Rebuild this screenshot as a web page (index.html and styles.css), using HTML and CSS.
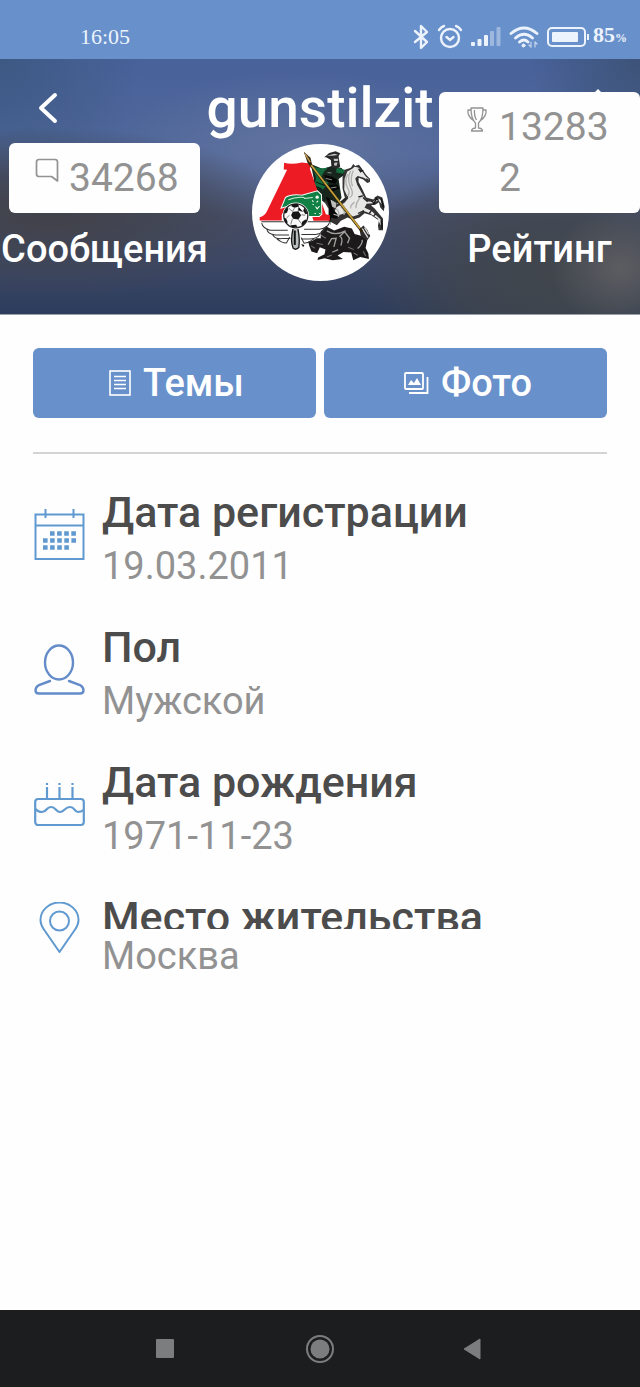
FILE: index.html
```html
<!DOCTYPE html>
<html lang="ru">
<head>
<meta charset="utf-8">
<meta name="viewport" content="width=device-width, initial-scale=1">
<title>gunstilzit</title>
<link rel="stylesheet" href="styles.css">
</head>
<body>
<div class="statusbar">
  <span class="clock">16:05</span>
  <div class="status-icons">
    <svg width="16" height="26" viewBox="0 0 16 26" fill="none" stroke="currentColor" stroke-width="2.4" stroke-linejoin="round" stroke-linecap="round"><path d="M2 7l12 11-6 6V2l6 6L2 18"/></svg>
    <svg width="26" height="26" viewBox="0 0 26 26" fill="none" stroke="currentColor" stroke-width="2.4" stroke-linecap="round"><circle cx="13" cy="14" r="9"/><path d="M2 6Q4 3 7 2M24 6Q22 3 19 2M9.500 13l3.500 3 3.500-3"/></svg>
    <svg width="30" height="22" viewBox="0 0 30 22" fill="currentColor"><rect x="0" y="16" width="4" height="4" rx="1"/><rect x="6.500" y="13" width="4" height="7" rx="1"/><rect x="13" y="9" width="4" height="11" rx="1"/><g opacity=".4"><rect x="19" y="5" width="4" height="15" rx="1"/><rect x="25.500" y="1" width="4" height="19" rx="1"/></g></svg>
    <svg width="30" height="24" viewBox="0 0 30 24" fill="none" stroke="currentColor" stroke-width="2.8" stroke-linecap="round"><path d="M2 8.500Q15-2.500 28 8.500M6.500 13Q15 5.500 23.500 13M10.500 17Q15 13 19 17"/><circle cx="14.500" cy="20.500" r="1.500" fill="currentColor" stroke-width="1"/><path d="M22 17v5m-2-2l2 2M26 22v-5m2 2l-2-2" stroke-width="1.200" opacity=".7"/></svg>
    <svg width="42" height="20" viewBox="0 0 42 20" fill="none" stroke="currentColor" stroke-width="2"><rect x="1" y="1" width="37" height="18" rx="4"/><rect x="5" y="5" width="26" height="10" rx="1" fill="currentColor" stroke="none"/><path d="M41 7v6"/></svg>
    <span class="charge">85<small>%</small></span>
  </div>
</div>

<header class="profile">
  <div class="titlebar">
    <button class="icon-button" type="button" aria-label="Назад"><svg width="24" height="34" viewBox="0 0 24 34" fill="none" stroke="currentColor" stroke-width="4" stroke-linecap="round" stroke-linejoin="round"><path d="M19 4L5 17l14 13"/></svg></button>
    <h1>gunstilzit</h1>
    <button class="icon-button" type="button" aria-label="Домой"><svg width="34" height="38" viewBox="0 0 34 38" fill="currentColor"><path d="M17 0L33 16H29V36H5V16H1Z"/></svg></button>
  </div>
  <div class="stats">
    <div class="stat">
      <div class="stat-box">
        <svg width="24" height="25" viewBox="0 0 24 25" fill="none" stroke="currentColor" stroke-width="1.700" stroke-linejoin="round"><path d="M4 1.500H20Q22.500 1.500 22.500 4V23L16.500 18.500H4Q1.500 18.500 1.500 16V4Q1.500 1.500 4 1.500Z"/></svg>
        <span>34268</span>
      </div>
      <div class="stat-label">Сообщения</div>
    </div>
    <div class="avatar">
      <svg viewBox="34 28 410 410" role="img" aria-label="Эмблема клуба">
        <circle cx="239" cy="233" r="205" fill="#fff"/>
        <!-- rider and cloak -->
        <path d="M210 88L246 103 272 94 302 100 316 116 293 133 302 189 292 205 254 205 221 181 214 155 219 133Z" fill="#17251d"/>
        <path d="M213 93Q240 106 263 97L249 112 237 134 264 142 247 164 220 157 226 128ZM287 98L314 106 306 117 286 113Z" fill="#146b3e"/>
        <path d="M222 112L238 121M226 142L254 153M224 155L242 162" stroke="#08170f" stroke-width="3"/>
        <path d="M250 68L265 55 284 50 298 56 293 65 298 96 287 102 272 98 270 76 256 68Z" fill="#2a2929"/>
        <path d="M257 63l24-6 11 4-18 2zM278 72h14l-1 7h-11zM280 84l10-1-3 10-7-1z" fill="#c7c8c5"/>
        <path d="M250 121l24 5 15 10-5 11-23-5zM264 151l24-2 8 12-22 9z" fill="#050505"/>
        <path d="M255 131l18 4M270 160l17-3M260 113l12 2" stroke="#86908b" stroke-width="3"/>
        <!-- horse -->
        <path d="M312 105L330 99 337 88 343 94 354 90 361 99 376 121 387 132 387 142 379 145 367 134 353 129 353 142 361 157 376 188 397 194 409 182 424 188 431 215 428 229 418 218 414 202 403 210 390 211 401 221 426 251 426 286 413 286 411 272 414 257 391 241 371 235 356 248 336 255 320 248 300 258 288 271 263 258 263 222 250 200 266 193 290 207 312 189 305 161 305 126Z" fill="#343232"/>
        <path d="M319 110L334 102 341 96 352 98 362 108 375 126 383 132 382 137 369 129 350 124 343 131 349 151 370 188 380 200 396 201 410 191 419 194 423 209 412 196 397 205 377 207 371 219 391 228 419 254 419 272 410 251 386 235 367 228 352 240 336 245 317 234 292 241 278 236 287 217 311 204 322 190 310 165 311 133Z" fill="#e7e7e5"/>
        <path d="M321 118Q309 140 320 159T315 190M329 109Q317 134 329 157T326 189M337 107Q326 134 335 154M363 182Q344 202 345 220M299 216Q314 224 309 240M286 222Q298 232 292 246M341 202Q328 211 329 221" fill="none" stroke="#b0b2b1" stroke-width="4"/>
        <path d="M355 105l9 3-5 3zM376 132l6 3M391 198l10 9M402 187l11 10M392 226l-7 10M405 236l-7 8M366 183l-14 3M366 188l14 13M351 236l18-9M321 185l-18 17" stroke="#242323" stroke-width="4" fill="#242323"/>
        <path d="M420 192l8 26M421 256l3 25M408 190l-11 19" stroke="#111" stroke-width="4"/>
        <path d="M255 186L275 195 278 225 290 238 289 252 270 249 268 271 264 256 265 219Z" fill="#080808"/>
        <path d="M271 197l14 8-2 13-8-3zM278 238l13 4" fill="#bebfbd" stroke="#bebfbd" stroke-width="3"/>
        <!-- dragon -->
        <path d="M239 291L255 274 280 287 310 276 333 281 341 297 363 303 379 315 374 339 382 355 384 372 358 366 337 376 331 353 308 351 290 362 306 372 275 376 251 370 230 375 232 368 251 358 254 344 237 337 229 355 212 350 205 332 202 320 214 318 227 310 240 310Z" fill="#1d1a1b"/>
        <path d="M258 288Q282 304 314 288L297 304Q308 310 300 332M262 329L272 311 286 310 279 336M309 288L326 310 320 325M350 341Q365 328 364 315M274 352l18-8" fill="none" stroke="#a1a19e" stroke-width="4"/>
        <path d="M241 301l14 9M227 325l19 4M322 337l17 7M338 354l12 7M367 349l7 14M211 333l11 7M258 366l15-6" stroke="#737171" stroke-width="3"/>
        <path d="M356 284L367 272 378 283 388 303 379 316 366 308 359 301Z" fill="#2d2b2b"/>
        <path d="M364 281l17 27M371 278l12 20" stroke="#dededb" stroke-width="4"/>
        <path d="M181 327l10 3-4 7z" fill="#161414"/>
        <!-- red letter mark -->
        <path d="M130 84Q151 91 184 83L213 87 207 102 255 238 267 241V258H218L197 186H157L123 240V257H57V247Q71 244 78 231L139 105 129 104Z" fill="#ec1b24"/>
        <path d="M121 220L134 188Q151 177 183 181L230 168 242 180 243 238 235 245H194L181 220 154 210Z" fill="#118044" stroke="#fff" stroke-width="3"/>
        <path d="M143 195Q164 185 191 188M190 191L216 188" stroke="#d2eddb" stroke-width="3" fill="none"/>
        <circle cx="229" cy="187" r="5" fill="#eff8f1"/><path d="M214 197l4 4m14-3-5 5m-3 12 5 7 7-8m-15 22h4m10 0h4M215 208l4 2" stroke="#f6fff8" stroke-width="3" fill="none"/>
        <!-- winged wheel -->
        <path d="M62 261H267M63 265Q66 280 88 286H141M78 282Q81 298 104 300H145M96 300Q104 313 124 311H149M108 311Q122 324 137 324L147 306M265 265Q259 280 235 283H190M251 280Q248 297 224 299H182M237 299Q230 311 208 312H181M220 312L201 323 190 325 181 308" fill="none" stroke="#343435" stroke-width="3"/>
        <path d="M157 280Q148 320 157 339Q165 347 174 338Q178 314 171 280Z" fill="#bbbfc0" stroke="#151515" stroke-width="4"/><path d="M162 287v43" stroke="#111" stroke-width="6"/>
        <circle cx="165" cy="243" r="38" fill="#fff" stroke="#fff" stroke-width="4"/>
        <circle cx="165" cy="243" r="36" fill="#f9f9f9" stroke="#28282a" stroke-width="4"/>
        <path d="M156 231l17-2 8 12-8 13-16-2-6-11zM153 208l18-1 4 8-14 4-9-5zM191 219l9 17-6 2-7-10zM194 254l5 4-12 14-6-4 4-8zM150 271l16-1 4 6-12 2-9-4zM130 249l6 2 5 11-4 4-7-10zM131 231l7-13 5 4-4 11-7 4z" fill="#161616"/>
        <path d="M161 220l-6 10M174 217l-2 9 14 4M182 240l11 1M173 254l7 10M155 252l-5 17M146 241l-9 9M154 229l-10-9" stroke="#444" stroke-width="2"/>
        <path d="M205 85L363 290" stroke="#31270d" stroke-width="8"/><path d="M211 91L357 281" stroke="#c9a23a" stroke-width="5"/><path d="M189 51L209 69 214 91 201 86Z" fill="#33260f"/><path d="M193 58l15 24" stroke="#c7a156" stroke-width="4"/>
      </svg>
    </div>
    <div class="stat stat-right">
      <div class="stat-box">
        <svg width="24" height="25" viewBox="0 0 24 25" fill="none" stroke="currentColor" stroke-width="1.300" stroke-linejoin="round"><path d="M6 1H18Q18 12 13.500 16V21Q17 21 17.500 24H6.500Q7 21 10.500 21V16Q6 12 6 1ZM6 3H3Q2 9 9 14M18 3H21Q22 9 15 14M9.500 3Q9 9 11.500 13"/></svg>
        <span>132832</span>
      </div>
      <div class="stat-label">Рейтинг</div>
    </div>
  </div>
</header>

<main>
  <div class="actions">
    <button type="button"><svg width="22" height="26" viewBox="0 0 22 26" fill="none" stroke="currentColor" stroke-width="1.600"><rect x="1" y="1" width="20" height="24"/><path d="M5 6.500h12M5 10.500h12M5 14.500h12M5 18.500h12"/></svg>Темы</button>
    <button type="button"><svg width="26" height="26" viewBox="0 0 26 26" fill="none" stroke="currentColor" stroke-width="1.800"><rect x="2" y="3" width="18" height="16" rx="1"/><path d="M24.500 7V23H6"/><path d="M5 15l3-5 3 3 3-5 4 7z" fill="currentColor" stroke="none"/></svg>Фото</button>
  </div>
  <hr>
  <dl class="details">
    <div class="detail">
      <svg viewBox="0 0 51 51" fill="none" stroke="currentColor" stroke-width="2"><path d="M1.500 5.500H49.500V50H1.500ZM1.500 16.500H49.500M11.500 0V9M39.500 0V9"/><path d="M16 24.500H42M9 31.500H42M9 38.500H35" stroke-width="4.600" stroke-dasharray="4.600 2.500"/></svg>
      <dt>Дата регистрации</dt>
      <dd>19.03.2011</dd>
    </div>
    <div class="detail detail-person">
      <svg viewBox="0 0 51 51" fill="none" stroke="currentColor" stroke-width="2.400" stroke-linecap="round"><ellipse cx="25" cy="18.500" rx="14" ry="17"/><path d="M16 37L5 41Q1.500 43 1.500 46.500Q1.500 49.500 5 49.500H46Q49.500 49.500 49.500 46.500Q49.500 43 46 41L35 37"/></svg>
      <dt>Пол</dt>
      <dd>Мужской</dd>
    </div>
    <div class="detail">
      <svg viewBox="0 0 51 51" fill="none" stroke="currentColor" stroke-width="2.200"><rect x="1.200" y="20" width="48.600" height="26" rx="3"/><path d="M1.500 30Q4 33 8 33C13 33 12 28 17 28S22 33 26 33 31 28 36 28 40 33 44 33Q47 33 49.500 31"/><path d="M13 8V19M25.500 8V19M38.500 8V19M13 4v2M25.500 4v2M38.500 4v2"/></svg>
      <dt>Дата рождения</dt>
      <dd>1971-11-23</dd>
    </div>
    <div class="detail detail-short">
      <svg viewBox="0 0 51 51" fill="none" stroke="currentColor" stroke-width="2" stroke-linejoin="round"><path d="M25.500 50L11 29Q6.500 23 6.500 18A19 17.500 0 0 1 44.500 18Q44.500 23 40 29Z"/><circle cx="25.500" cy="19" r="9.500"/></svg>
      <dt>Место жительства</dt>
      <dd>Москва</dd>
    </div>
  </dl>
</main>

<nav class="system-nav">
  <button type="button" aria-label="Последние приложения"><svg width="30" height="30" viewBox="0 0 30 30"><rect x="6" y="5" width="18" height="19" rx="1" fill="currentColor"/></svg></button>
  <button type="button" aria-label="Главный экран"><svg width="30" height="30" viewBox="0 0 30 30"><circle cx="15" cy="15" r="9.500" fill="currentColor"/><circle cx="15" cy="15" r="13" fill="none" stroke="currentColor" stroke-width="2"/></svg></button>
  <button type="button" aria-label="Назад"><svg width="30" height="30" viewBox="0 0 30 30"><path d="M4 15L20 5V25Z" fill="currentColor" stroke="currentColor" stroke-linejoin="round"/></svg></button>
</nav>
</body>
</html>
```
FILE: styles.css
```css
* { box-sizing: border-box; }
body {
  margin: 0;
  min-height: 100vh;
  display: flex;
  flex-direction: column;
  background: #fefefe;
  font-family: Roboto, "Noto Sans", sans-serif;
}
svg { display: block; flex: none; }
button {
  font: inherit;
  color: inherit;
  background: none;
  border: 0;
  padding: 0;
  display: flex;
  align-items: center;
  justify-content: center;
}

.statusbar {
  display: flex;
  align-items: center;
  justify-content: space-between;
  height: 59px;
  padding: 14px 13px 0 80px;
  background: #6890cb;
  color: #edf3fc;
  font: 22px/30px "Liberation Serif", serif;
}
.status-icons { display: flex; align-items: center; gap: 8px; }
.charge { margin-left: -4px; font-weight: 700; }
.charge small { font-size: 12px; }

.profile {
  padding-bottom: 29px;
  color: #fff;
  border-bottom: 1px solid #98a0aa;
  background:
    radial-gradient(ellipse 70px 60px at 97% 82%, #5c5d61 0%, #5c5d6100 100%),
    radial-gradient(ellipse 190px 130px at 86% 85%, #41464c 0%, #41464cc0 45%, #41464c00 100%),
    radial-gradient(ellipse 240px 85px at 8% 60%, #414148 0%, #41444fcc 45%, #41444f00 100%),
    radial-gradient(ellipse 190px 75px at 47% 35%, #62749f 0%, #62749f00 100%),
    radial-gradient(ellipse 110px 130px at 100% 0%, #3d5378 0%, #3d537800 100%),
    radial-gradient(ellipse 140px 140px at 0% 0%, #3d5983 0%, #3d598300 100%),
    linear-gradient(#48629a 0%, #50679a 38%, #474f6b 62%, #3c4867 80%, #2d3c5c 100%);
}
.titlebar {
  display: grid;
  grid-template-columns: 84px 1fr 84px;
  align-items: center;
  height: 98px;
}
.icon-button { height: 60px; padding-left: 12px; }
.icon-button:last-child { padding: 0; }
h1 {
  margin: 0;
  text-align: center;
  font-size: 55px;
  line-height: 64px;
  font-weight: 500;
}
.stats {
  position: relative;
  z-index: 1;
  display: grid;
  grid-template-columns: minmax(0, 209fr) minmax(0, 222fr) minmax(0, 209fr);
  align-items: end;
  margin-top: -65px;
}
.stat-box {
  display: flex;
  align-items: flex-start;
  gap: 10px;
  margin: 0 9px;
  padding: 10px 20px 9px 26px;
  border-radius: 6px;
  background: #fefefe;
  color: #929292;
  font-size: 39px;
  line-height: 51px;
}
.stat-box svg { margin-top: 5px; }
.stat-box span { min-width: 0; overflow-wrap: anywhere; }
.stat-right { padding-left: 8px; }
.stat-right .stat-box { margin: 0; }
.stat-label {
  text-align: center;
  font-size: 38px;
  line-height: 72px;
  font-weight: 500;
}
.avatar { justify-self: center; width: 137px; padding-bottom: 4px; }

main { flex: 1; padding: 33px 33px 32px; }
.actions { display: grid; grid-template-columns: 1fr 1fr; gap: 8px; }
.actions button {
  gap: 12px;
  height: 70px;
  padding-left: 4px;
  border-radius: 6px;
  background: #6890cb;
  color: #fff;
  font-size: 38px;
  font-weight: 500;
}
hr { margin: 34px 0 0; border: 0; border-top: 2px solid #d4d4d4; }

.details { margin: 31px 0 0; display: grid; gap: 27px; }
.detail {
  display: grid;
  grid-template-columns: 51px 1fr;
  column-gap: 18px;
}
.detail svg {
  grid-row: 1 / 3;
  width: 51px;
  height: 51px;
  margin: 24px 0 0 1px;
  color: #5f99d0;
}
.detail-person svg { color: #648cc9; }
dt {
  color: #4c4c4c;
  font-size: 43px;
  line-height: 54px;
  font-weight: 500;
}
dd {
  margin: 0;
  color: #929292;
  font-size: 38px;
  line-height: 54px;
}
.detail-short svg { margin-top: 12px; }
.detail-short dt { height: 39px; overflow: hidden; }

.system-nav {
  display: grid;
  grid-template-columns: repeat(3, 1fr);
  height: 77px;
  padding: 0 88px;
  background: #1c1d1f;
  color: #7c7d7f;
}
```
